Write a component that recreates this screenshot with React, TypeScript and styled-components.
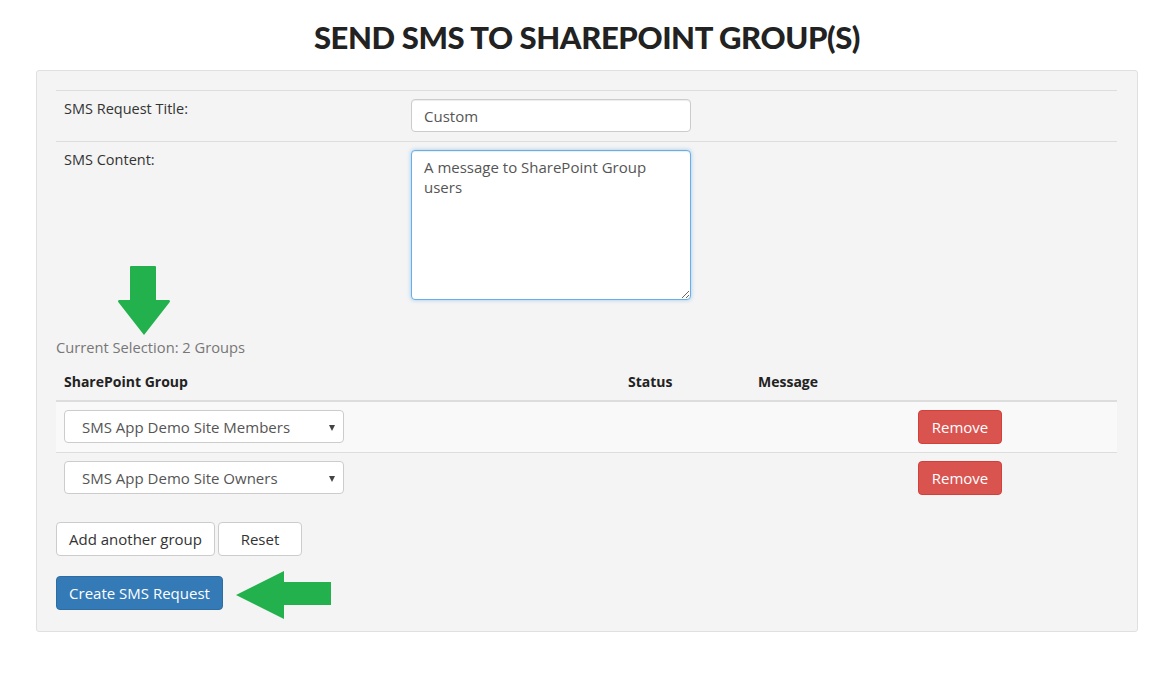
import React from "react";
import styled, { createGlobalStyle } from "styled-components";

const Global = createGlobalStyle`
  html, body { margin: 0; padding: 0; background: #fff; }
  body { font-family: "Open Sans", Lato, Arial, sans-serif; font-size: 15px; color: #333; }
  * { box-sizing: border-box; }
`;

const Page = styled.div`
  width: 1176px;
  padding: 17px 38px 0 36px;
`;

const Title = styled.h1`
  margin: 0 0 13px;
  text-align: center;
  font-family: Lato, Arial, sans-serif;
  font-weight: 900;
  font-size: 31px;
  line-height: 40px;
  letter-spacing: -0.4px;
  color: #222;
`;

const Panel = styled.div`
  background: #f4f4f4;
  border: 1px solid #e0e0e0;
  border-radius: 3px;
  padding: 19px 20px 21px 19px;
`;

const FormTable = styled.div`
  display: grid;
  grid-template-columns: 347px 1fr;
`;

const FormCell = styled.div`
  border-top: 1px solid #ddd;
  padding: 8px 8px 9px;
  display: flex;
  align-items: flex-start;
`;

const Label = styled.div`
  font-size: 14.5px;
  line-height: 20px;
  color: #333;
`;

const TextInput = styled.input`
  width: 280px;
  height: 33px;
  border: 1px solid #ccc;
  border-radius: 4px;
  background: #fff;
  padding: 6px 12px;
  font: inherit;
  font-size: 15px;
  color: #555;
  box-shadow: inset 0 1px 1px rgba(0,0,0,0.075);
`;

const TextArea = styled.textarea`
  width: 280px;
  height: 150px;
  border: 1px solid #66afe9;
  border-radius: 4px;
  background: #fff;
  padding: 6px 12px;
  font: inherit;
  font-size: 15px;
  line-height: 20px;
  color: #555;
  outline: none;
  box-shadow: inset 0 1px 1px rgba(0,0,0,0.075), 0 0 4px rgba(102,175,233,0.6);
  resize: both;
`;

const ArrowWrap = styled.div`
  position: relative;
  height: 0;
`;

const FloatArrow = styled.svg<{ $left: number; $top: number }>`
  position: absolute;
  left: ${(p) => p.$left}px;
  top: ${(p) => p.$top}px;
`;

const Selection = styled.div`
  margin-top: 28px;
  color: #777;
  font-size: 14.7px;
  line-height: 20px;
`;

const GroupTable = styled.table`
  width: 100%;
  border-collapse: collapse;
  margin-top: 7px;
`;

const Th = styled.th<{ $w?: number }>`
  text-align: left;
  font-weight: 700;
  font-size: 14px;
  color: #222;
  padding: 8px;
  line-height: 20px;
  border-bottom: 2px solid #ddd;
  width: ${(p) => (p.$w ? `${p.$w}px` : "auto")};
`;

const Tr = styled.tr<{ $striped?: boolean }>`
  background: ${(p) => (p.$striped ? "#f9f9f9" : "transparent")};
`;

const Td = styled.td`
  padding: 8px;
  vertical-align: top;
  border-top: 1px solid #ddd;
`;

const SelectBox = styled.div`
  position: relative;
  width: 280px;
  height: 33px;
  border: 1px solid #ccc;
  border-radius: 4px;
  background: #fff;
  display: flex;
  align-items: center;
  padding-left: 17px;
  font-size: 15px;
  color: #555;
  &::after {
    content: "";
    position: absolute;
    right: 8px;
    top: 14px;
    border-left: 3px solid transparent;
    border-right: 3px solid transparent;
    border-top: 6px solid #444;
  }
`;

const Btn = styled.button<{ $variant?: "danger" | "primary" | "default"; $w?: number }>`
  font: inherit;
  font-size: 15px;
  height: 34px;
  width: ${(p) => (p.$w ? `${p.$w}px` : "auto")};
  padding: 0 8px;
  border-radius: 4px;
  cursor: pointer;
  white-space: nowrap;
  border: 1px solid
    ${(p) => (p.$variant === "danger" ? "#d43f3a" : p.$variant === "primary" ? "#2e6da4" : "#ccc")};
  background: ${(p) => (p.$variant === "danger" ? "#d9534f" : p.$variant === "primary" ? "#337ab7" : "#fff")};
  color: ${(p) => (p.$variant === "default" || !p.$variant ? "#333" : "#fff")};
`;

const ButtonRow = styled.div`
  display: flex;
  gap: 3px;
  margin-top: 19px;
`;

const SubmitRow = styled.div`
  margin-top: 20px;
  position: relative;
`;

const DownArrow = () => (
  <FloatArrow $left={62} $top={-72} width="54" height="72" viewBox="0 0 54 72">
    <path d="M13 1 H37 Q38 1 38 2 V35 H51 Q53 36 51 38 L26 70 L1 38 Q-1 36 1 35 H12 V2 Q12 1 13 1 Z" fill="#22b14c" />
  </FloatArrow>
);

const LeftArrow = () => (
  <FloatArrow $left={180} $top={-5} width="96" height="50" viewBox="0 0 96 50">
    <path d="M0 24 L48 0 V11 H95 V34 H48 V48 Z" fill="#22b14c" />
  </FloatArrow>
);

export default function App() {
  return (
    <>
      <Global />
      <Page>
        <Title>SEND SMS TO SHAREPOINT GROUP(S)</Title>
        <Panel>
          <FormTable>
            <FormCell>
              <Label>SMS Request Title:</Label>
            </FormCell>
            <FormCell>
              <TextInput defaultValue="Custom" />
            </FormCell>
            <FormCell>
              <Label>SMS Content:</Label>
            </FormCell>
            <FormCell>
              <TextArea defaultValue={"A message to SharePoint Group users"} />
            </FormCell>
          </FormTable>
          <Selection>
            <ArrowWrap>
              <DownArrow />
            </ArrowWrap>
            Current Selection: 2 Groups
          </Selection>
          <GroupTable>
            <thead>
              <tr>
                <Th $w={564}>SharePoint Group</Th>
                <Th $w={130}>Status</Th>
                <Th $w={160}>Message</Th>
                <Th></Th>
              </tr>
            </thead>
            <tbody>
              <Tr $striped>
                <Td><SelectBox>SMS App Demo Site Members</SelectBox></Td>
                <Td></Td>
                <Td></Td>
                <Td><Btn $variant="danger" $w={84}>Remove</Btn></Td>
              </Tr>
              <Tr>
                <Td><SelectBox>SMS App Demo Site Owners</SelectBox></Td>
                <Td></Td>
                <Td></Td>
                <Td><Btn $variant="danger" $w={84}>Remove</Btn></Td>
              </Tr>
            </tbody>
          </GroupTable>
          <ButtonRow>
            <Btn $w={159}>Add another group</Btn>
            <Btn $w={84}>Reset</Btn>
          </ButtonRow>
          <SubmitRow>
            <Btn $variant="primary" $w={167}>Create SMS Request</Btn>
            <LeftArrow />
          </SubmitRow>
        </Panel>
      </Page>
    </>
  );
}
